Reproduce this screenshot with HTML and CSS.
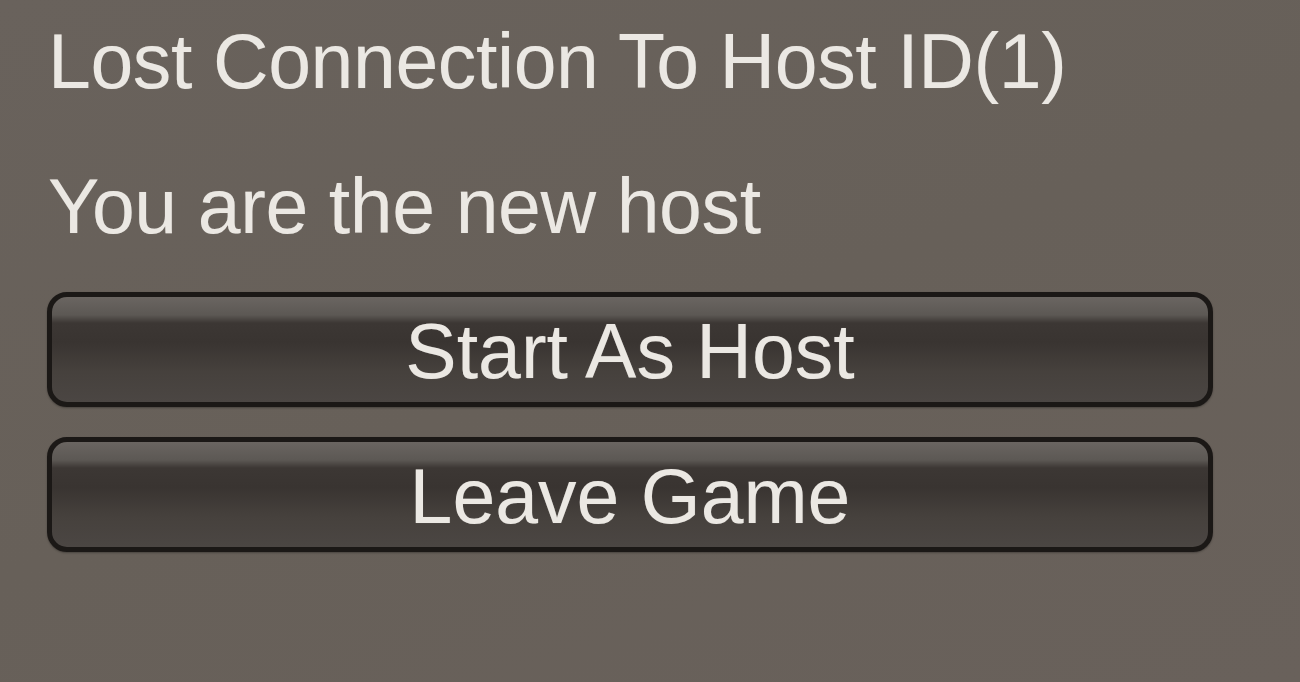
FILE: index.html
```html
<!DOCTYPE html>
<html>
<head>
<meta charset="utf-8">
<link rel="stylesheet" href="styles.css">
</head>
<body>
<div class="panel">
  <div class="label first">Lost Connection To Host ID(1)</div>
  <div class="label second">You are the new host</div>
  <div class="btn first-btn">Start As Host</div>
  <div class="btn second-btn">Leave Game</div>
</div>
</body>
</html>
```

FILE: styles.css
```css
html, body {
  margin: 0;
  padding: 0;
  width: 1300px;
  height: 682px;
  overflow: hidden;
}
body {
  background: linear-gradient(160deg, #69625c 0%, #676059 50%, #69615b 100%);
  font-family: "Liberation Sans", Arial, sans-serif;
  color: #ebe8e3;
}
.panel {
  display: flex;
  flex-direction: column;
  padding: 17px 87px 0 47px;
}
.label {
  font-size: 77px;
  letter-spacing: -0.4px;
  line-height: 88px;
  height: 88px;
  white-space: nowrap;
  padding-left: 1px;
  text-shadow: 0 0 1px rgba(235,232,227,0.3);
}
.label.second {
  margin-top: 57px;
}
.btn {
  box-sizing: border-box;
  height: 115px;
  border: 5px solid #1b1816;
  border-radius: 20px;
  background: linear-gradient(to bottom,
    #6a6561 0px, #5c5854 18px, #3c3734 26px, #393431 45px, #46413d 75px, #4b4643 105px);
  font-size: 77px;
  letter-spacing: 0;
  line-height: 88px;
  text-align: center;
  padding-top: 10px;
  white-space: nowrap;
  text-shadow: 0 0 1px rgba(235,232,227,0.3);
  box-shadow: 0 1px 2px rgba(0,0,0,0.3);
}
.first-btn {
  margin-top: 42px;
}
.second-btn {
  margin-top: 30px;
}
```
